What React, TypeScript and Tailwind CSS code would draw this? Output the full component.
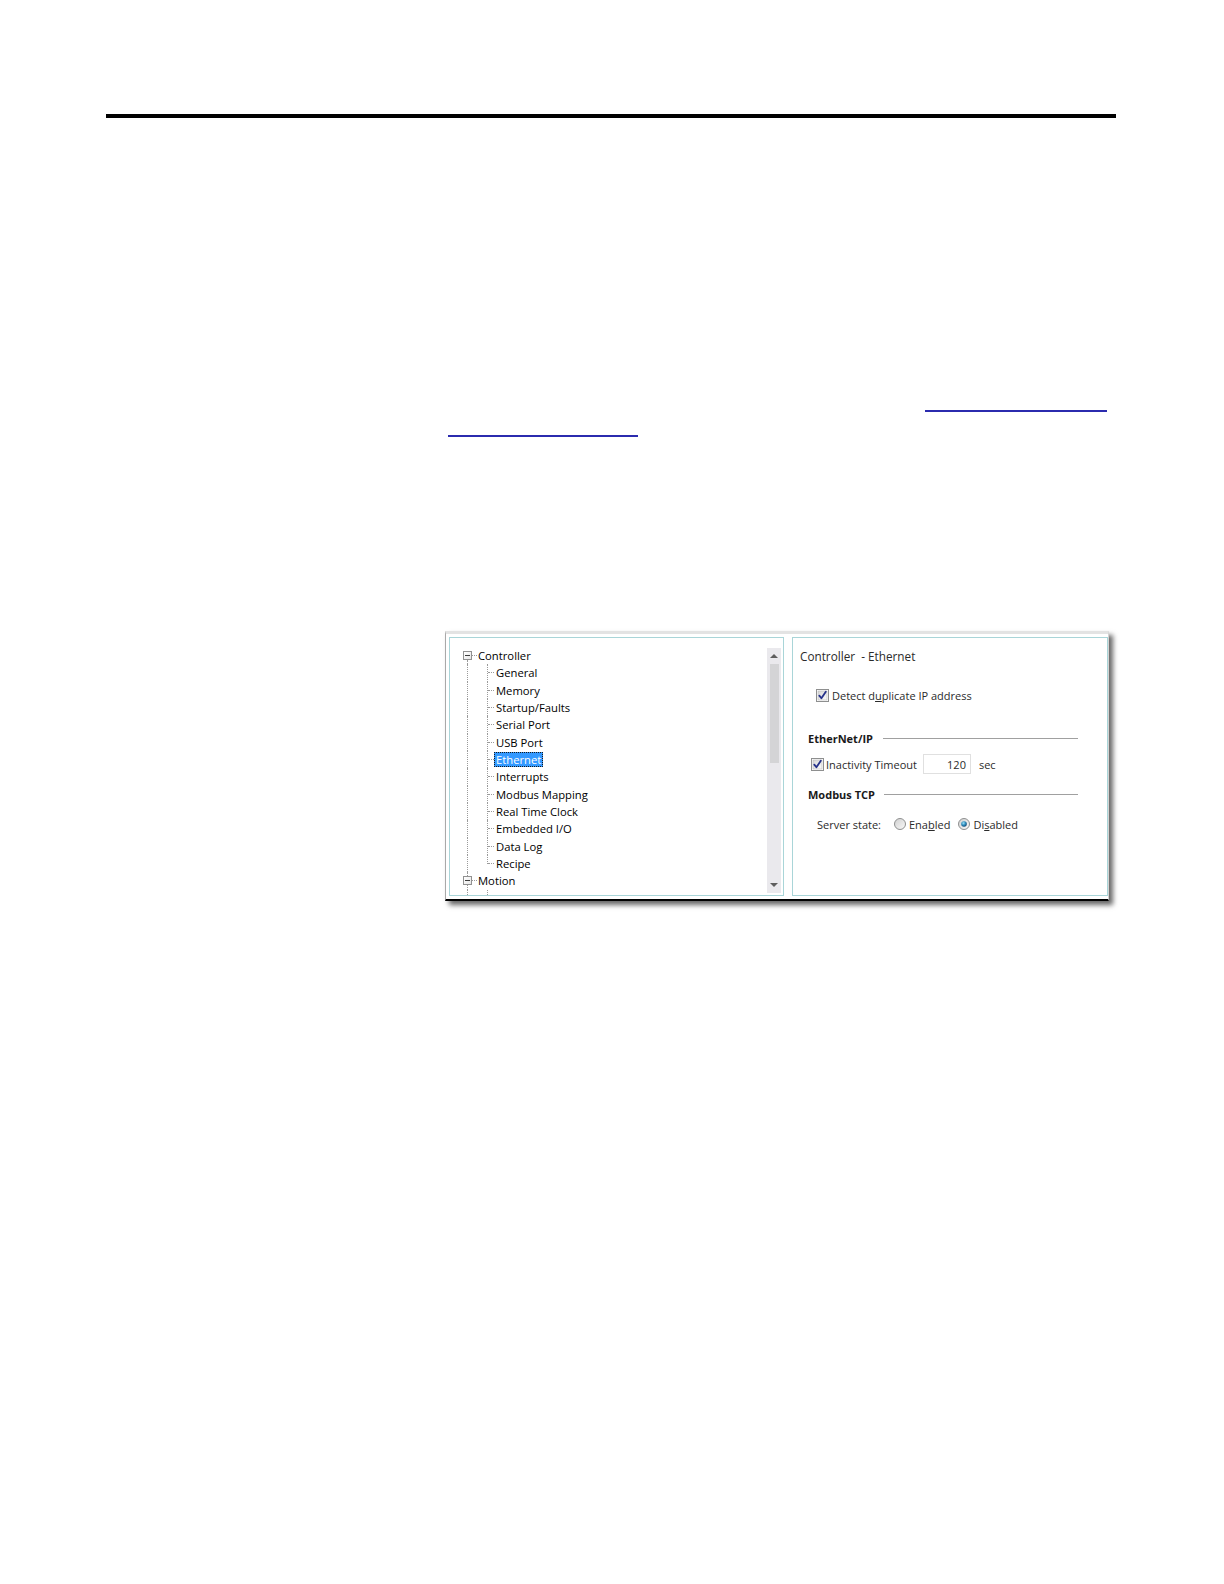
const children = [
  'General',
  'Memory',
  'Startup/Faults',
  'Serial Port',
  'USB Port',
  'Ethernet',
  'Interrupts',
  'Modbus Mapping',
  'Real Time Clock',
  'Embedded I/O',
  'Data Log',
  'Recipe',
]

function MinusBox() {
  return (
    <span className="flex h-[9px] w-[9px] items-center justify-center border border-[#919191] bg-gradient-to-br from-white to-[#e6e6e6]">
      <span className="h-px w-[5px] bg-[#3c3c3c]" />
    </span>
  )
}

function RootRow({ label, first }: { label: string; first?: boolean }) {
  return (
    <div className="flex h-[17.33px] items-stretch">
      <span className="w-[13px] shrink-0" />
      <span className="flex w-[9px] shrink-0 flex-col items-center">
        <span className={first ? 'h-[4px]' : 'h-[4px] border-l border-dotted border-[#9a9a9a]'} />
        <MinusBox />
        <span className="flex-1 border-l border-dotted border-[#9a9a9a]" />
      </span>
      <span className="flex w-[6px] shrink-0 items-center">
        <span className="w-[5px] border-t border-dotted border-[#9a9a9a]" />
      </span>
      <span className="flex items-center leading-none text-black">{label}</span>
    </div>
  )
}

function ChildRow({ label, last, selected }: { label?: string; last?: boolean; selected?: boolean }) {
  return (
    <div className="flex h-[17.33px] items-stretch">
      <span className="w-[17px] shrink-0" />
      <span className="w-[20px] shrink-0 border-l border-dotted border-[#9a9a9a]" />
      <span className="relative w-[7px] shrink-0">
        <span className={'absolute left-0 top-0 border-l border-dotted border-[#9a9a9a] ' + (last ? 'h-[9px]' : 'h-full')} />
        <span className="absolute left-px top-[8px] w-[6px] border-t border-dotted border-[#9a9a9a]" />
      </span>
      {label && (
        <span className="flex items-center">
          <span
            className={
              selected
                ? 'flex h-[15px] items-center border border-dotted border-[#1a1a1a] bg-[#3399ff] px-[1px] leading-none text-white'
                : 'flex h-[15px] items-center px-[2px] leading-none text-black'
            }
          >
            {label}
          </span>
        </span>
      )}
    </div>
  )
}

function CheckBox() {
  return (
    <svg width="13" height="13" viewBox="0 0 13 13" className="shrink-0">
      <defs>
        <linearGradient id="cbg" x1="0" y1="0" x2="1" y2="1">
          <stop offset="0" stopColor="#d6d6d6" />
          <stop offset="1" stopColor="#fbfbfb" />
        </linearGradient>
      </defs>
      <rect x="0.5" y="0.5" width="12" height="12" fill="#fff" stroke="#8e8f8f" />
      <rect x="2" y="2" width="9" height="9" fill="url(#cbg)" stroke="#b8b8b8" strokeWidth="0.6" />
      <path d="M3.3 6.6 L5.4 9.3 L9.8 2.8" fill="none" stroke="#25318a" strokeWidth="1.8" strokeLinecap="round" strokeLinejoin="round" />
    </svg>
  )
}

function Radio({ on }: { on?: boolean }) {
  return (
    <svg width="12" height="12" viewBox="0 0 12 12" className="shrink-0">
      <defs>
        <linearGradient id={on ? 'rdon' : 'rdoff'} x1="0" y1="0" x2="1" y2="1">
          <stop offset="0" stopColor="#cfcfcf" />
          <stop offset="1" stopColor="#fafafa" />
        </linearGradient>
        <radialGradient id="rdot" cx="0.4" cy="0.35" r="0.7">
          <stop offset="0" stopColor="#9fe0f5" />
          <stop offset="0.5" stopColor="#2f8fc0" />
          <stop offset="1" stopColor="#0d3e6a" />
        </radialGradient>
      </defs>
      <circle cx="6" cy="6" r="5.5" fill={on ? 'url(#rdon)' : 'url(#rdoff)'} stroke="#8e8f8f" />
      {on && <circle cx="6" cy="6" r="2.8" fill="url(#rdot)" />}
    </svg>
  )
}

function ScrollBar() {
  return (
    <div className="mb-[2px] mr-[2px] mt-[10px] flex w-[14px] shrink-0 flex-col bg-[#eae9ed]">
      <div className="flex h-[16px] items-center justify-center">
        <span className="h-0 w-0 border-x-[4px] border-b-[4px] border-x-transparent border-b-[#5e5e5e]" />
      </div>
      <div className="mx-auto h-[99px] w-[9px] bg-[#d4d4d6]" />
      <div className="flex-1" />
      <div className="flex h-[16px] items-center justify-center">
        <span className="h-0 w-0 border-x-[4px] border-t-[4px] border-x-transparent border-t-[#5e5e5e]" />
      </div>
    </div>
  )
}

function Heading({ label, gap }: { label: string; gap: string }) {
  return (
    <div className="ml-[15px] mr-[29px] flex h-[16px] items-center">
      <span className="font-bold leading-none text-[#1a1a1a]">{label}</span>
      <span className={'h-px flex-1 bg-[#a0a0a0] ' + gap} />
    </div>
  )
}

export default function App() {
  return (
    <div className="h-[1584px] w-[1224px] bg-white pt-[114px] font-['Open_Sans','Noto_Sans',sans-serif]">
      <div className="ml-[106px] h-[4px] w-[1010px] bg-black" />

      <div className="ml-[448px] mt-[292px] w-[659px]">
        <div className="flex justify-end">
          <a className="block h-[2px] w-[182px] bg-[#2b2bae]" />
        </div>
        <a className="mt-[23px] block h-[2px] w-[190px] bg-[#2b2bae]" />
      </div>

      <div className="ml-[445px] mt-[194px] flex w-[664px] gap-[8px] border-b-[2px] border-l border-r border-t-[3px] border-b-black border-l-[#a9a9a9] border-r-[#d2d2d2] border-t-[#e3e3e3] bg-white pb-[3px] pl-[3px] pt-[3px] shadow-[4px_4px_5px_rgba(0,0,0,0.6)]">
        <div className="flex h-[259px] w-[335px] shrink-0 border border-[#a9d5d8] text-[11.25px]">
          <div className="flex-1 overflow-hidden pt-[9px]">
            <RootRow label="Controller" first />
            {children.map((c, i) => (
              <ChildRow key={c} label={c} last={i === children.length - 1} selected={c === 'Ethernet'} />
            ))}
            <RootRow label="Motion" />
            <ChildRow />
          </div>
          <ScrollBar />
        </div>

        <div className="flex h-[259px] flex-1 flex-col border border-[#a9d5d8] text-[11px] text-[#2b2b2b]">
          <div className="ml-[7px] mt-[11px] flex h-[16px] items-center text-[11.75px] leading-none">
            Controller&nbsp; - Ethernet
          </div>

          <div className="ml-[23px] mt-[22px] flex h-[16px] items-center gap-[3px]">
            <CheckBox />
            <span className="leading-none">
              Detect d<span className="underline">u</span>plicate IP address
            </span>
          </div>

          <div className="mt-[27px]">
            <Heading label="EtherNet/IP" gap="ml-[10px]" />
          </div>

          <div className="ml-[18px] mt-[8px] flex h-[20px] items-center">
            <CheckBox />
            <span className="ml-[2px] leading-none">Inactivity Timeout</span>
            <span className="ml-[6px] flex h-[20px] w-[48px] items-center justify-end border border-[#e0e0e0] pr-[4px] leading-none">
              120
            </span>
            <span className="ml-[8px] leading-none">sec</span>
          </div>

          <div className="mt-[12px]">
            <Heading label="Modbus TCP" gap="ml-[9px]" />
          </div>

          <div className="ml-[24px] mt-[14px] flex h-[16px] items-center">
            <span className="leading-none">Server state:</span>
            <span className="ml-[13px]">
              <Radio />
            </span>
            <span className="ml-[3px] leading-none">
              Ena<span className="underline">b</span>led
            </span>
            <span className="ml-[8px]">
              <Radio on />
            </span>
            <span className="ml-[3px] leading-none">
              Di<span className="underline">s</span>abled
            </span>
          </div>
        </div>
      </div>
    </div>
  )
}
